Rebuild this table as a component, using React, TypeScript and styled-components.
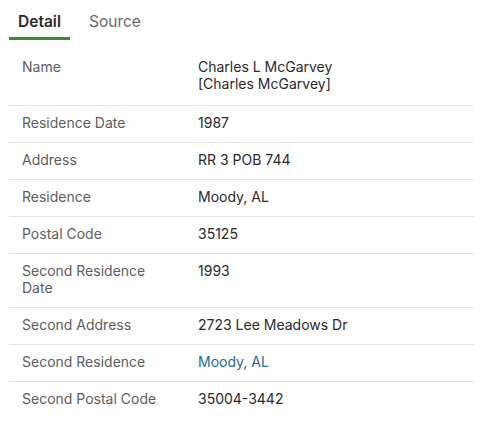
import React from "react";
import styled, { createGlobalStyle } from "styled-components";

const Global = createGlobalStyle`
  html, body { margin: 0; padding: 0; background: #ffffff; }
  body { font-family: Inter, "Liberation Sans", Arial, sans-serif; }
`;

const Page = styled.div`
  padding: 0 13px 0 9px;
  width: 487px;
  box-sizing: border-box;
`;

const TabBar = styled.div`
  display: flex;
  height: 40px;
  align-items: stretch;
`;

const Tab = styled.div<{ $active?: boolean }>`
  box-sizing: border-box;
  width: ${(p) => (p.$active ? "61px" : "auto")};
  padding-left: ${(p) => (p.$active ? "0" : "19px")};
  padding-top: 5px;
  display: flex;
  justify-content: ${(p) => (p.$active ? "center" : "flex-start")};
  align-items: center;
  font-size: 15.5px;
  font-weight: ${(p) => (p.$active ? 600 : 400)};
  color: ${(p) => (p.$active ? "#2b2b2b" : "#6a6a6a")};
  border-bottom: 3px solid ${(p) => (p.$active ? "#3d8b2c" : "transparent")};
`;

const Table = styled.div`
  margin-top: 10px;
  display: flex;
  flex-direction: column;
`;

const Row = styled.div<{ $last?: boolean }>`
  display: grid;
  grid-template-columns: 176px 1fr;
  border-bottom: 1px solid ${(p) => (p.$last ? "transparent" : "#e3e3e3")};
  font-size: 14px;
  line-height: 17px;

  &:first-child > div {
    padding-bottom: 12.5px;
  }
`;

const Label = styled.div`
  padding: 8px 16px 11px 13px;
  color: #5e5e5e;
`;

const Value = styled.div<{ $link?: boolean }>`
  padding: 8px 0 11px 13px;
  color: ${(p) => (p.$link ? "#1a6f93" : "#2a2a2a")};
`;

const rows: { label: string; value: React.ReactNode; link?: boolean }[] = [
  { label: "Name", value: (<>Charles L McGarvey<br />[Charles McGarvey]</>) },
  { label: "Residence Date", value: "1987" },
  { label: "Address", value: "RR 3 POB 744" },
  { label: "Residence", value: "Moody, AL" },
  { label: "Postal Code", value: "35125" },
  { label: "Second Residence Date", value: "1993" },
  { label: "Second Address", value: "2723 Lee Meadows Dr" },
  { label: "Second Residence", value: "Moody, AL", link: true },
  { label: "Second Postal Code", value: "35004-3442" },
];

export default function App() {
  return (
    <Page>
      <Global />
      <TabBar>
        <Tab $active>Detail</Tab>
        <Tab>Source</Tab>
      </TabBar>
      <Table>
        {rows.map((r, i) => (
          <Row key={i} $last={i === rows.length - 1}>
            <Label>{r.label}</Label>
            <Value $link={r.link}>{r.value}</Value>
          </Row>
        ))}
      </Table>
    </Page>
  );
}
